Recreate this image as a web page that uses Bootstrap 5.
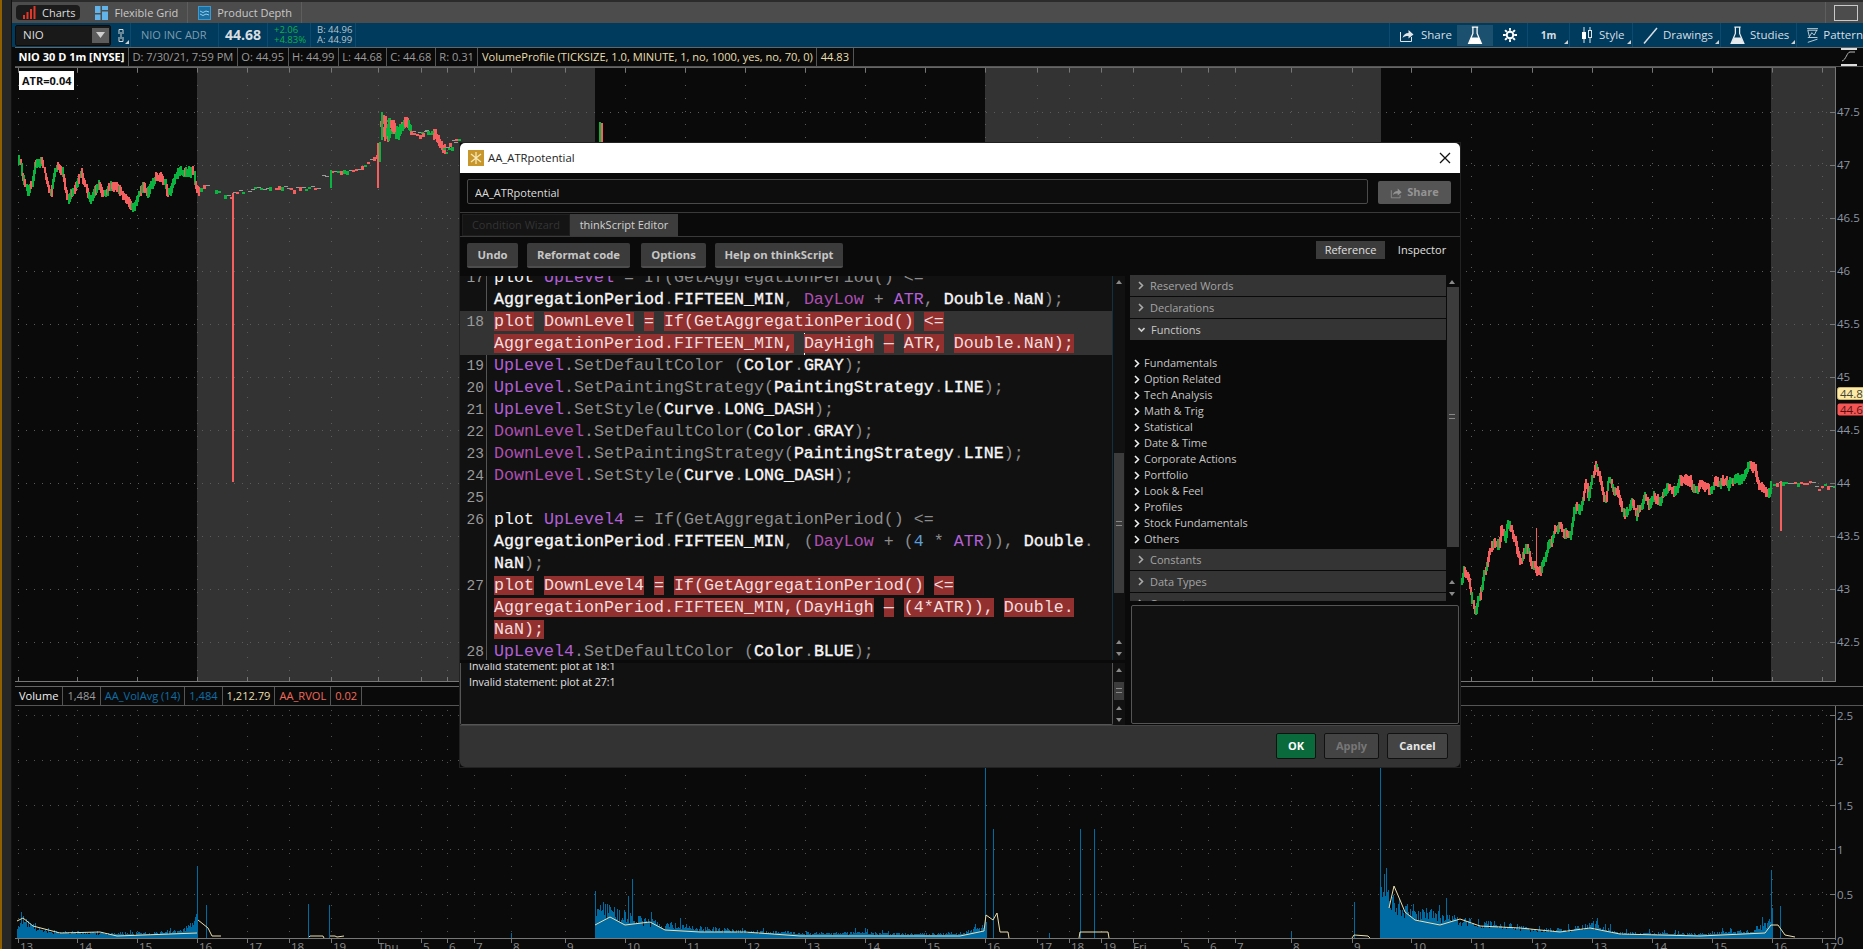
<!DOCTYPE html>
<html lang="en">
<head>
<meta charset="utf-8">
<title>AA_ATRpotential</title>
<link href="https://cdn.jsdelivr.net/npm/bootstrap@5.3.0/dist/css/bootstrap.min.css" rel="stylesheet">
<style>
html,body{height:949px;overflow:hidden;background:#0a0a0a}
body{font-family:"Open Sans","Liberation Sans",sans-serif;font-size:11px;color:#ccc;line-height:1.2}
.shell{width:1863px;height:949px;position:relative}
.edge-strip{width:2px;background:#8f5f00}
.rail-strip{width:10px;background:#262626;border-right:1px solid #111}
.main-col{width:1851px}
.top-sliver{height:2px;background:#2b2b2b}
.tabs-bar{height:21px;background:#4c4c4c;padding-left:4px}
.ws-tab{height:15px;padding:0 5px 0 7px;color:#c9c9c9;font-size:11px;gap:6px;white-space:nowrap}
.ws-tab.on{background:#1b1b1b;border-radius:4px;color:#ddd;margin-right:8px}
.ws-sep{width:1px;height:21px;background:#5e5e5e;margin:0 6px 0 0}
.win-box{width:24px;height:16px;border:1px solid #c9c9c9;margin-left:8px;margin-right:5px}
.blue-bar{height:24px;background:#003a5c;padding-left:3px;color:#c7d2d9}
.sym-box{width:96px;height:21px;background:#191919;border:1px solid #0b0b0b;border-radius:2px;padding-left:7px;color:#ddd;font-size:11.5px}
.sym-drop{width:17px;height:15px;background:#5c5c5c;margin-right:1px}
.bsep{width:1px;height:24px;background:#0c4b70;flex:none}
.link-cell{width:19px;height:24px;position:relative}
.sym-name{color:#7f9cae;font-size:11px;padding:0 10px;width:87px;white-space:nowrap}
.last-px{font-weight:700;font-size:14px;color:#d8dde0;width:48px;text-align:center;white-space:nowrap}
.mini{font-size:9.500px;line-height:10px;padding-left:6px;white-space:nowrap}
.mini.up{color:#10b14a;width:42px}
.mini.ba{color:#b8c4cc;width:44px}
.tool-item{height:24px;gap:5px;font-size:11.500px;color:#d7dfe4;white-space:nowrap;position:relative;flex:none;overflow:hidden}
.ti-share{width:67px;padding-left:9px;gap:6px}
.ti-flask{width:36px;height:21px;background:#1c506f}
.ti-gear{width:34px}
.ti-tf{width:41px;font-size:10px;font-weight:700}
.ti-style{width:62px;padding-left:11px;gap:6px}
.ti-draw{width:87px;padding-left:10px}
.ti-stud{width:75px;padding-left:9px}
.ti-patt{width:66px;padding-left:10px}
.tool-item.more:after,.link-cell:after{content:"";position:absolute;right:1px;bottom:3px;border-style:solid;border-width:0 0 4px 4px;border-color:transparent transparent #d0d0d0 transparent}
.head-row{height:20px;margin-left:3px;background:#0a0a0a;border-top:1px solid #666;border-bottom:1px solid #555;white-space:nowrap;overflow:hidden}
.hc{height:100%;padding:0 3.500px;border-right:1px solid #555;color:#9b9b9b;font-size:11.100px}
.hc.t{color:#fff;font-weight:700;font-size:11px}
.hc.v{color:#e9dfae}
.hc.w{color:#f2f2f2}
.hc.b{color:#0f6ea6}
.hc.r{color:#ef6a5c}
.pane-svg{display:block;margin-left:3px}
.gap-band{height:4px;background:#0a0a0a}
.study-row{border-top:1px solid #666;border-bottom:1px solid #555}
.study-row .hc{padding:0 4px}
.side-fx{width:28px;height:18px;flex:none}
.atr-tag{top:71px;left:19px;background:#fff;color:#111;font-weight:700;font-size:11px;padding:3px 2px 3px 3px;line-height:13px}
.dlg{left:460px;top:143px;width:1000px;height:624px;background:#0a0a0a;border:0;border-radius:0;box-shadow:0 0 0 1px #222}
.dlg-title{height:30px;background:#fff;color:#222;padding:0 8px;font-size:11.300px;border:0;border-radius:0}
.dlg-x{width:12px;height:12px;margin-right:1px}
.name-row{height:39px;padding:6px 9px 0 7px;gap:10px}
.name-input{height:25px;padding:1px 7px 0;background:#0d0d0d;border:1px solid #4a4a4a;border-radius:2px;color:#ddd;font-size:11px;width:901px}
.name-input:focus{background:#0d0d0d;color:#ddd}
.btn.share-btn{width:73px;height:23px;margin-top:2px;padding:0;background:#555;border:0;border-radius:2px;color:#949494;font-size:11px;font-weight:700;gap:4px}
.tabs-row{height:25px;border-top:1px solid #3a3a3a;border-bottom:1px solid #3a3a3a;padding:1px 0 1px 2px;margin:0}
.tabs-row .nav-link{padding:0;height:22px;line-height:20px;width:108px;text-align:center;font-size:11px;border-radius:0;background:#141414;color:#333;border:1px solid #1e1e1e}
.tabs-row .nav-link.active{background:#3d3d3d;color:#d2d2d2;border-color:#3d3d3d}
.tool-row{height:38px;padding:6px 7px 0 7px}
.btn.tb{height:25px;padding:0;background:#3b3b3b;border:0;border-bottom:2px solid #4d4d4d;border-radius:2px;color:#c6c6c6;font-size:11.300px;font-weight:700;line-height:23px}
.tb-undo{width:51px;margin-right:9px}
.tb-ref{width:103px;margin-right:11px}
.tb-opt{width:65px;margin-right:9px}
.tb-help{width:128px}
.ri-group{margin-top:-2px;gap:6px}
.ri-tab{font-size:11px;height:18px;line-height:18px;color:#e0e0e0;text-align:center}
.ri-tab.on{background:#3b3b3b;width:69px}
.ri-tab.off{width:62px}
.work{height:450px}
.left-stack{width:665px;gap:3px;padding-top:1px}
.editor{height:384px;background:#111;overflow:hidden}
.code-wrap{width:653px;height:384px;overflow:hidden;background:#111;border-right:1px solid #12303f}
.code-in{margin-top:-9px}
.cl{height:22px;font-family:"Liberation Mono",monospace;font-size:16.670px;line-height:22px;white-space:pre;color:#8c8c8c}
.cl.cur{background:#333}
.lnum{display:inline-block;width:27px;height:22px;padding-right:2px;text-align:right;font-size:14.500px;color:#9a9a9a;border-right:1px solid #555;margin-right:7px;box-sizing:border-box;vertical-align:top}
.cur .lnum{border-right-color:#333}
.k{color:#f4f4f4}
.cn{color:#f6f6f6;-webkit-text-stroke:.35px #f6f6f6}
.pu{color:#b360d8}
.pd{color:#b04fb4}
.nu{color:#5c9fd6}
.er{background:#923030;color:#f1dddd}
.caret-mark{display:inline-block;width:1px;height:22px;background:#fff;margin-right:-1px;vertical-align:top}
.sbar{width:12px;background:#111;position:relative}
.sb-thumb{left:1px;right:1px;background:#3c3c3c}
.sb-a{left:3px;width:0;height:0;border-left:3px solid transparent;border-right:3px solid transparent}
.sb-a.u{border-bottom:4px solid #8a8a8a}
.sb-a.d{border-top:4px solid #8a8a8a}
.sb-g{left:3px;width:6px;height:5px;border-top:1px solid #888;border-bottom:1px solid #888}
.console{height:62px;background:#111;overflow:hidden}
.con-in{width:653px;border:1px solid #555;border-top:0;border-radius:0 0 2px 2px;padding:0 8px;color:#e2e2e2;font-size:10.600px;line-height:16px;overflow:hidden}
.con-txt{margin-top:-5px}
.right-stack{width:330px;margin-left:5px;gap:4px}
.ref-panel{height:326px;overflow:hidden;background:#0a0a0a}
.ref-list{width:316px}
.acc-row{height:21px;margin-bottom:1px;background:#343434;color:#a5a5a5;padding-left:8px;gap:6px;font-size:11px}
.acc-row.open{color:#c9c9c9}
.fn-list{padding:14px 0 2px 4px}
.fn-row{height:16px;gap:4px;color:#c5c5c5;font-size:11px}
.ref-info{height:119px;margin-left:1px;width:328px;border:1px solid #555;border-radius:2px;background:#111}
.dlg-foot{height:42px;background:#333;border:0;border-top:1px solid #444;border-radius:0;padding:7px 12px 0 0;gap:8px}
.btn.fb{height:26px;padding:0;border:1px solid #111;border-radius:2px;background:#444;color:#e8e8e8;font-size:11px;font-weight:700;line-height:24px}
.btn.fb.ok{background:#0b6a3c;color:#fff;width:40px}
.btn.fb.ap{color:#777;width:55px}
.btn.fb.ca{width:61px}
</style>
</head>
<body>
<div class="shell d-flex">
  <div class="edge-strip"></div>
  <div class="rail-strip"></div>
  <div class="main-col d-flex flex-column">
    <div class="top-sliver"></div>
    <div class="tabs-bar d-flex align-items-center">
      <div class="ws-tab on d-flex align-items-center">
        <svg width="13" height="13" viewBox="0 0 13 13"><g fill="#e0392b"><rect x="0" y="9" width="2" height="4"/><rect x="3.500" y="6" width="2" height="7"/><rect x="7" y="3" width="2" height="10"/><rect x="10.500" y="0" width="2" height="13"/></g></svg>Charts</div>
      <div class="ws-tab d-flex align-items-center">
        <svg width="13" height="14" viewBox="0 0 13 14"><g fill="#62b3ea"><rect x="0" y="0" width="5.500" height="7"/><rect x="7" y="0" width="6" height="4"/><rect x="0" y="8.500" width="5.500" height="5.500"/><rect x="7" y="5.500" width="6" height="8.500"/></g></svg>Flexible Grid</div>
      <div class="ws-sep ms-1"></div>
      <div class="ws-tab d-flex align-items-center ps-1">
        <svg width="13" height="14" viewBox="0 0 13 14"><rect x=".5" y=".5" width="12" height="13" fill="#1f6f9e" stroke="#3b9ad2"/><path d="M2 5l3 1.500 3-1.500 3 1M2 8l3 1.500 3-1.500 3 1" fill="none" stroke="#8fd0f4"/></svg>Product Depth</div>
      <div class="ws-sep ms-1"></div>
      <div class="flex-grow-1"></div>
      <div class="ws-sep m-0"></div>
      <div class="win-box"></div>
    </div>
    <div class="blue-bar d-flex align-items-center">
      <div class="sym-box d-flex align-items-center justify-content-between">NIO
        <div class="sym-drop d-flex align-items-center justify-content-center"><svg width="9" height="6" viewBox="0 0 9 6"><path d="M0 0h9L4.500 6z" fill="#cfcfcf"/></svg></div>
      </div>
      <div class="link-cell d-flex align-items-center justify-content-center">
        <svg width="6" height="15" viewBox="0 0 6 15"><path d="M1 6V1.500h4V6M1 9v4.500h4V9M3 4v7" fill="none" stroke="#d5d5d5"/></svg>
      </div>
      <div class="bsep"></div>
      <div class="sym-name">NIO INC ADR</div>
      <div class="bsep"></div>
      <div class="last-px">44.68</div>
      <div class="bsep"></div>
      <div class="mini up">+2.06<br>+4.83%</div>
      <div class="bsep"></div>
      <div class="mini ba">B: 44.96<br>A: 44.99</div>
      <div class="bsep"></div>
      <div class="flex-grow-1"></div>
      <div class="bsep"></div>
      <div class="tool-item ti-share d-flex align-items-center">
        <svg width="16" height="16" viewBox="0 0 16 16"><path d="M1.500 5v9.500h11V10" fill="none" stroke="#dfe6ea"/><path d="M3.500 11c.5-3 3-5 6-5V3l5 4.500-5 4V9c-3 0-4.500.5-6 2z" fill="#dfe6ea"/></svg>Share</div>
      <div class="tool-item ti-flask d-flex align-items-center justify-content-center">
        <svg width="16" height="19" viewBox="0 0 14 18"><path d="M4 1h6M5 1v6L1 16.500h12L9 7V1" fill="none" stroke="#fff" stroke-width="1.200"/><path d="M3.500 11h7L13 17H1z" fill="#fff"/></svg></div>
      <div class="tool-item ti-gear d-flex align-items-center justify-content-center">
        <svg width="14" height="14" viewBox="0 0 15 15"><circle cx="7.500" cy="7.500" r="3.500" fill="none" stroke="#fff" stroke-width="2"/><path d="M7.500 0v3M7.500 12v3M0 7.500h3M12 7.500h3M2.200 2.200l2.100 2.100M10.700 10.700l2.100 2.100M2.200 12.800l2.100-2.100M10.700 4.300l2.100-2.100" stroke="#fff" stroke-width="2"/></svg></div>
      <div class="bsep"></div>
      <div class="tool-item ti-tf more d-flex align-items-center justify-content-center">1m</div>
      <div class="bsep"></div>
      <div class="tool-item ti-style more d-flex align-items-center">
        <svg width="12" height="16" viewBox="0 0 12 16"><path d="M3 0v16M9 0v16" stroke="#dfe6ea"/><rect x="1" y="5" width="4" height="7" fill="#fff"/><rect x="7.500" y="3.500" width="3" height="7" fill="#003a5c" stroke="#dfe6ea"/></svg>Style</div>
      <div class="bsep"></div>
      <div class="tool-item ti-draw more d-flex align-items-center">
        <svg width="15" height="17" viewBox="0 0 15 17"><path d="M1 16.500L14 1" stroke="#d7dfe4" stroke-width="1.500"/></svg>Drawings</div>
      <div class="bsep"></div>
      <div class="tool-item ti-stud more d-flex align-items-center">
        <svg width="15" height="19" viewBox="0 0 14 18"><path d="M4 1h6M5 1v6L1 16.500h12L9 7V1" fill="none" stroke="#e5ebee" stroke-width="1.200"/><path d="M3.500 11h7L13 17H1z" fill="#e5ebee"/></svg>Studies</div>
      <div class="bsep"></div>
      <div class="tool-item ti-patt d-flex align-items-center">
        <svg width="14" height="19" viewBox="0 0 14 19"><path d="M0 1h14M1 3h12M1 3l2 8 3-5 3 3 3-6M1 12h12M1 18l12-4" fill="none" stroke="#e5ebee"/></svg><span>Pattern</span></div>
    </div>

    <div class="d-flex head-row align-items-center">
      <div class="hc t d-flex align-items-center">NIO 30 D 1m [NYSE]</div>
      <div class="hc d-flex align-items-center">D: 7/30/21, 7:59 PM</div>
      <div class="hc d-flex align-items-center">O: 44.95</div>
      <div class="hc d-flex align-items-center">H: 44.99</div>
      <div class="hc d-flex align-items-center">L: 44.68</div>
      <div class="hc d-flex align-items-center">C: 44.68</div>
      <div class="hc d-flex align-items-center">R: 0.31</div>
      <div class="hc v d-flex align-items-center">VolumeProfile (TICKSIZE, 1.0, MINUTE, 1, no, 1000, yes, no, 70, 0)</div>
      <div class="hc v d-flex align-items-center">44.83</div>
      <div class="flex-grow-1"></div>
      <svg class="side-fx" viewBox="0 0 28 18"><path d="M6 1h16M6 17h16" stroke="#ddd" stroke-width="2"/><path d="M7 13c4-1 5-9 8-9h5" fill="none" stroke="#bbb"/></svg>
    </div>
    <svg id="mainChart" class="pane-svg" width="1848" height="615" viewBox="15 67 1848 615"></svg>
    <div class="gap-band"></div>
    <div class="d-flex head-row study-row align-items-center">
      <div class="hc w d-flex align-items-center">Volume</div>
      <div class="hc d-flex align-items-center">1,484</div>
      <div class="hc b d-flex align-items-center">AA_VolAvg (14)</div>
      <div class="hc b d-flex align-items-center">1,484</div>
      <div class="hc v d-flex align-items-center">1,212.79</div>
      <div class="hc r d-flex align-items-center">AA_RVOL</div>
      <div class="hc r d-flex align-items-center">0.02</div>
    </div>
    <svg id="volChart" class="pane-svg" width="1848" height="243" viewBox="15 706 1848 243"></svg>
  </div>

  <div class="atr-tag position-absolute">ATR=0.04</div>

  <div class="dlg card position-absolute">
    <div class="dlg-title card-header d-flex align-items-center">
      <svg class="me-1" width="16" height="16" viewBox="0 0 16 16"><rect width="16" height="16" fill="#c7962c"/><path d="M8 2v12M3 4l10 8M13 4L3 12" stroke="#f6e9b8" stroke-width="1.300"/></svg>
      <span>AA_ATRpotential</span>
      <svg class="dlg-x ms-auto" viewBox="0 0 12 12"><path d="M1 1l10 10M11 1L1 11" stroke="#111" stroke-width="1.300"/></svg>
    </div>
    <div class="name-row d-flex">
      <input class="form-control name-input" value="AA_ATRpotential" aria-label="Study name">
      <button class="btn share-btn d-flex align-items-center justify-content-center" type="button">
        <svg width="13" height="12" viewBox="0 0 16 15"><path d="M1.500 4v9.500h11V10" fill="none" stroke="#949494"/><path d="M3.500 10c.5-3 3-5 6-5V2l5 4.500-5 4V8c-3 0-4.500.5-6 2z" fill="#949494"/></svg>Share</button>
    </div>
    <ul class="nav tabs-row">
      <li class="nav-item"><a class="nav-link" href="#">Condition Wizard</a></li>
      <li class="nav-item"><a class="nav-link active" href="#">thinkScript Editor</a></li>
    </ul>
    <div class="tool-row d-flex align-items-start">
      <button class="btn tb tb-undo" type="button">Undo</button>
      <button class="btn tb tb-ref" type="button">Reformat code</button>
      <button class="btn tb tb-opt" type="button">Options</button>
      <button class="btn tb tb-help" type="button">Help on thinkScript</button>
      <div class="ms-auto d-flex ri-group align-items-center">
        <div class="ri-tab on">Reference</div>
        <div class="ri-tab off">Inspector</div>
      </div>
    </div>
    <div class="work d-flex">
      <div class="left-stack d-flex flex-column">
        <div class="editor d-flex">
          <div class="code-wrap">
            <div class="code-in">
<div class="cl"><span class="lnum">17</span><span class="k">plot</span> <span class="pu">UpLevel</span> = If(GetAggregationPeriod() &lt;=</div>
<div class="cl"><span class="lnum"></span><span class="cn">AggregationPeriod</span>.<span class="cn">FIFTEEN_MIN</span>, <span class="pd">DayLow</span> + <span class="pu">ATR</span>, <span class="cn">Double</span>.<span class="cn">NaN</span>);</div>
<div class="cl cur"><span class="lnum">18</span><span class="er">plot</span> <span class="er">DownLevel</span> <span class="er">=</span> <span class="er">If(GetAggregationPeriod()</span> <span class="er">&lt;=</span></div>
<div class="cl cur"><span class="lnum"></span><span class="er">AggregationPeriod.FIFTEEN_MIN,</span> <span class="caret-mark"></span><span class="er">DayHigh</span> <span class="er">—</span> <span class="er">ATR,</span> <span class="er">Double.NaN);</span></div>
<div class="cl"><span class="lnum">19</span><span class="pu">UpLevel</span>.SetDefaultColor (<span class="cn">Color</span>.<span class="cn">GRAY</span>);</div>
<div class="cl"><span class="lnum">20</span><span class="pu">UpLevel</span>.SetPaintingStrategy(<span class="cn">PaintingStrategy</span>.<span class="cn">LINE</span>);</div>
<div class="cl"><span class="lnum">21</span><span class="pu">UpLevel</span>.SetStyle(<span class="cn">Curve</span>.<span class="cn">LONG_DASH</span>);</div>
<div class="cl"><span class="lnum">22</span><span class="pd">DownLevel</span>.SetDefaultColor(<span class="cn">Color</span>.<span class="cn">GRAY</span>);</div>
<div class="cl"><span class="lnum">23</span><span class="pd">DownLevel</span>.SetPaintingStrategy(<span class="cn">PaintingStrategy</span>.<span class="cn">LINE</span>);</div>
<div class="cl"><span class="lnum">24</span><span class="pd">DownLevel</span>.SetStyle(<span class="cn">Curve</span>.<span class="cn">LONG_DASH</span>);</div>
<div class="cl"><span class="lnum">25</span></div>
<div class="cl"><span class="lnum">26</span><span class="k">plot</span> <span class="pu">UpLevel4</span> = If(GetAggregationPeriod() &lt;=</div>
<div class="cl"><span class="lnum"></span><span class="cn">AggregationPeriod</span>.<span class="cn">FIFTEEN_MIN</span>, (<span class="pd">DayLow</span> + (<span class="nu">4</span> * <span class="pu">ATR</span>)), <span class="cn">Double</span>.</div>
<div class="cl"><span class="lnum"></span><span class="cn">NaN</span>);</div>
<div class="cl"><span class="lnum">27</span><span class="er">plot</span> <span class="er">DownLevel4</span> <span class="er">=</span> <span class="er">If(GetAggregationPeriod()</span> <span class="er">&lt;=</span></div>
<div class="cl"><span class="lnum"></span><span class="er">AggregationPeriod.FIFTEEN_MIN,(DayHigh</span> <span class="er">—</span> <span class="er">(4*ATR)),</span> <span class="er">Double.</span></div>
<div class="cl"><span class="lnum"></span><span class="er">NaN);</span></div>
<div class="cl"><span class="lnum">28</span><span class="pu">UpLevel4</span>.SetDefaultColor (<span class="cn">Color</span>.<span class="cn">BLUE</span>);</div>
            </div>
          </div>
          <div class="sbar">
            <i class="sb-a u position-absolute" style="top:4px"></i>
            <i class="sb-thumb position-absolute" style="top:177px;height:140px"></i>
            <i class="sb-g position-absolute" style="top:245px"></i>
            <i class="sb-a u position-absolute" style="top:364px"></i>
            <i class="sb-a d position-absolute" style="top:376px"></i>
          </div>
        </div>
        <div class="console d-flex">
          <div class="con-in"><div class="con-txt">Invalid statement: plot at 18:1<br>Invalid statement: plot at 27:1</div></div>
          <div class="sbar">
            <i class="sb-a u position-absolute" style="top:5px"></i>
            <i class="sb-thumb position-absolute" style="top:19px;height:18px"></i>
            <i class="sb-g position-absolute" style="top:25px"></i>
            <i class="sb-a u position-absolute" style="top:43px"></i>
            <i class="sb-a d position-absolute" style="top:55px"></i>
          </div>
        </div>
      </div>
      <div class="right-stack d-flex flex-column">
        <div class="ref-panel d-flex">
          <div class="ref-list">
            <div class="acc-row d-flex align-items-center"><svg width="6" height="9" viewBox="0 0 6 9"><path d="M1 1l3.500 3.500L1 8" fill="none" stroke="#aaa" stroke-width="1.600"/></svg>Reserved Words</div>
            <div class="acc-row d-flex align-items-center"><svg width="6" height="9" viewBox="0 0 6 9"><path d="M1 1l3.500 3.500L1 8" fill="none" stroke="#aaa" stroke-width="1.600"/></svg>Declarations</div>
            <div class="acc-row open d-flex align-items-center"><svg width="7" height="9" viewBox="0 0 7 9"><path d="M.5 3l3 3 3-3" fill="none" stroke="#ccc" stroke-width="1.600"/></svg>Functions</div>
            <div class="fn-list">
              <div class="fn-row d-flex align-items-center"><svg width="6" height="9" viewBox="0 0 6 9"><path d="M1 1l3.500 3.500L1 8" fill="none" stroke="#eee" stroke-width="1.600"/></svg>Fundamentals</div>
              <div class="fn-row d-flex align-items-center"><svg width="6" height="9" viewBox="0 0 6 9"><path d="M1 1l3.500 3.500L1 8" fill="none" stroke="#eee" stroke-width="1.600"/></svg>Option Related</div>
              <div class="fn-row d-flex align-items-center"><svg width="6" height="9" viewBox="0 0 6 9"><path d="M1 1l3.500 3.500L1 8" fill="none" stroke="#eee" stroke-width="1.600"/></svg>Tech Analysis</div>
              <div class="fn-row d-flex align-items-center"><svg width="6" height="9" viewBox="0 0 6 9"><path d="M1 1l3.500 3.500L1 8" fill="none" stroke="#eee" stroke-width="1.600"/></svg>Math &amp; Trig</div>
              <div class="fn-row d-flex align-items-center"><svg width="6" height="9" viewBox="0 0 6 9"><path d="M1 1l3.500 3.500L1 8" fill="none" stroke="#eee" stroke-width="1.600"/></svg>Statistical</div>
              <div class="fn-row d-flex align-items-center"><svg width="6" height="9" viewBox="0 0 6 9"><path d="M1 1l3.500 3.500L1 8" fill="none" stroke="#eee" stroke-width="1.600"/></svg>Date &amp; Time</div>
              <div class="fn-row d-flex align-items-center"><svg width="6" height="9" viewBox="0 0 6 9"><path d="M1 1l3.500 3.500L1 8" fill="none" stroke="#eee" stroke-width="1.600"/></svg>Corporate Actions</div>
              <div class="fn-row d-flex align-items-center"><svg width="6" height="9" viewBox="0 0 6 9"><path d="M1 1l3.500 3.500L1 8" fill="none" stroke="#eee" stroke-width="1.600"/></svg>Portfolio</div>
              <div class="fn-row d-flex align-items-center"><svg width="6" height="9" viewBox="0 0 6 9"><path d="M1 1l3.500 3.500L1 8" fill="none" stroke="#eee" stroke-width="1.600"/></svg>Look &amp; Feel</div>
              <div class="fn-row d-flex align-items-center"><svg width="6" height="9" viewBox="0 0 6 9"><path d="M1 1l3.500 3.500L1 8" fill="none" stroke="#eee" stroke-width="1.600"/></svg>Profiles</div>
              <div class="fn-row d-flex align-items-center"><svg width="6" height="9" viewBox="0 0 6 9"><path d="M1 1l3.500 3.500L1 8" fill="none" stroke="#eee" stroke-width="1.600"/></svg>Stock Fundamentals</div>
              <div class="fn-row d-flex align-items-center"><svg width="6" height="9" viewBox="0 0 6 9"><path d="M1 1l3.500 3.500L1 8" fill="none" stroke="#eee" stroke-width="1.600"/></svg>Others</div>
            </div>
            <div class="acc-row d-flex align-items-center"><svg width="6" height="9" viewBox="0 0 6 9"><path d="M1 1l3.500 3.500L1 8" fill="none" stroke="#aaa" stroke-width="1.600"/></svg>Constants</div>
            <div class="acc-row d-flex align-items-center"><svg width="6" height="9" viewBox="0 0 6 9"><path d="M1 1l3.500 3.500L1 8" fill="none" stroke="#aaa" stroke-width="1.600"/></svg>Data Types</div>
            <div class="acc-row d-flex align-items-center"><svg width="6" height="9" viewBox="0 0 6 9"><path d="M1 1l3.500 3.500L1 8" fill="none" stroke="#aaa" stroke-width="1.600"/></svg>Operators</div>
          </div>
          <div class="sbar flex-grow-1 bg-transparent">
            <i class="sb-a u position-absolute" style="top:5px"></i>
            <i class="sb-thumb position-absolute" style="top:12px;height:260px"></i>
            <i class="sb-g position-absolute" style="top:139px"></i>
            <i class="sb-a u position-absolute" style="top:305px"></i>
            <i class="sb-a d position-absolute" style="top:317px"></i>
          </div>
        </div>
        <div class="ref-info"></div>
      </div>
    </div>
    <div class="dlg-foot card-footer d-flex justify-content-end flex-grow-1">
      <button class="btn fb ok" type="button">OK</button>
      <button class="btn fb ap" type="button">Apply</button>
      <button class="btn fb ca" type="button">Cancel</button>
    </div>
  </div>
</div>
<script src="https://cdn.jsdelivr.net/npm/bootstrap@5.3.0/dist/js/bootstrap.bundle.min.js"></script>
<script>
(function(){
var seed=12345;function R(){seed=(seed*16807)%2147483647;return seed/2147483647;}
var ticks=[18,77,137,197,247,289,331,378,421,447,474,511,565,625,685,745,805,865,925,985,1037,1069,1101,1133,1181,1208,1235,1291,1352,1411,1471,1532,1592,1652,1712,1772,1822];
var lbl=['13','14','15','16','17','18','19','Thu','5','6','7','8','9','10','11','12','13','14','15','16','17','18','19','Fri','5','6','7','8','9','10','11','12','13','14','15','16','17'];
var o=[];
function rect(x,y,w,h,c){o.push('<rect x="'+x+'" y="'+y+'" width="'+w+'" height="'+h+'" fill="'+c+'" shape-rendering="crispEdges"/>');}
function line(a,b,c,d,s,da){o.push('<line x1="'+a+'" y1="'+b+'" x2="'+c+'" y2="'+d+'" stroke="'+s+'"'+(da?' stroke-dasharray="'+da+'"':'')+' shape-rendering="crispEdges"/>');}
function text(x,y,t,c){o.push('<text x="'+x+'" y="'+y+'" fill="'+c+'" font-family="Open Sans" font-size="11.500">'+t+'</text>');}
function mapPts(a,ox,oy,s){var r=[];for(var i=0;i<a.length;i++)r.push([ox+a[i][0]/s,oy+a[i][1]/s]);return r;}
function interp(p,x){for(var i=1;i<p.length;i++){if(x<=p[i][0]){var t=(x-p[i-1][0])/(p[i][0]-p[i-1][0]||1);return p[i-1][1]+t*(p[i][1]-p[i-1][1]);}}return p[p.length-1][1];}
function dense(p,noise){var prev=interp(p,p[0][0]);for(var x=p[0][0];x<p[p.length-1][0];x+=1.2){var x0=Math.round(x);var y=interp(p,x)+(R()-.5)*noise;var h=Math.max(Math.abs(prev-y),6)+R()*5;var top=(prev+y)/2-h/2;var up=interp(p,x+1.500)<interp(p,x-1.500);var c=(R()<.82)===up?'#0ab53f':'#f55f5f';rect(x0,Math.round(top),2,Math.round(h),c);prev=y;}}
function sparse(p){for(var x=p[0][0];x<p[p.length-1][0];x+=3){if(R()<.14)continue;var y=Math.round(interp(p,x)+(R()-.5)*3);var r=R();var c=r<.38?'#0ab53f':(r<.7?'#f55f5f':'#9a9a9a');rect(Math.round(x),y,r<.7?3:4,r<.7?(R()<.4?4:2):1,c);}}
/* main chart */
rect(15,67,182,615,'#0a0a0a');rect(197,67,398,615,'#333');rect(595,67,390,615,'#0a0a0a');rect(985,67,396,615,'#333');rect(1381,67,390,615,'#0a0a0a');rect(1771,67,64,615,'#333');
var yp=[[47.5,'47.5'],[47,'47'],[46.5,'46.5'],[46,'46'],[45.500,'45.5'],[45,'45'],[44.5,'44.5'],[44,'44'],[43.5,'43.5'],[43,'43'],[42.5,'42.5']];
yp.forEach(function(a){var y=Math.round(483-(a[0]-44)*106);line(18,y,1830,y,'#5c5c5c','1 7');line(1830,y,1835,y,'#777');text(1837,y+4,a[1],'#8b95a3');});
ticks.forEach(function(x){line(x,72,x,678,'#5c5c5c','1 12');line(x,67,x,72,'#777');line(x,677,x,682,'#777');});
var L=mapPts([[55,305],[65,350],[78,400],[90,370],[100,320],[125,300],[132,350],[148,400],[165,320],[185,340],[200,425],[240,340],[265,420],[295,370],[305,400],[330,380],[360,395],[395,450],[425,375],[437,405],[465,345],[490,360],[500,405],[530,340],[565,335],[575,325],[585,390],[598,395]],0,60,3);
dense(L,6);
var M=mapPts([[600,385],[615,375],[655,395],[685,410],[710,390],[735,400],[760,385],[850,380],[880,385],[960,382]],0,60,3);sparse(M);
var N=mapPts([[965,350],[990,330],[1030,330],[1070,330],[1090,310],[1130,285]],0,60,3);sparse(N);
var P=mapPts([[1145,180],[1170,175],[1190,225],[1215,185],[1240,225],[1275,210],[1300,220],[1330,275],[1340,270],[1375,235]],0,60,3);sparse(P);
dense(mapPts([[1150,180],[1160,235],[1178,195],[1188,232],[1205,190],[1222,190]],0,60,3),6);
dense(mapPts([[1300,225],[1335,278]],0,60,3),4);
var Q=mapPts([[0,190],[10,240],[25,190],[45,215],[75,185],[90,215]],380,60,3);dense(Q,5);
sparse(mapPts([[90,215],[115,230],[135,210],[165,215],[190,265],[230,235],[240,240]],380,60,3));
rect(232,193,2,289,'#f55f5f');rect(377,143,2,45,'#f55f5f');rect(330,170,2,18,'#0ab53f');rect(379,142,2,20,'#0ab53f');rect(381,112,2,28,'#0ab53f');rect(384,120,2,21,'#f55f5f');
rect(599,122,2,21,'#0ab53f');rect(601,123,2,20,'#f55f5f');
var Rr=mapPts([[182,690],[190,660],[205,700],[222,785],[240,720],[265,610],[280,570],[295,600],[300,520],[312,575],[322,515],[340,570],[358,630],[378,590],[395,650],[418,660],[440,590],[460,545],[478,520],[490,550],[510,550],[525,460],[535,485],[555,400],[562,445],[585,340],[605,430],[615,450],[622,385],[635,425],[650,430],[670,495],[695,460],[705,490],[735,440],[745,465],[758,430],[775,460],[800,410],[822,420],[835,390],[865,392],[880,425],[895,405],[930,420],[940,395],[985,400],[1025,385],[1045,345],[1060,355],[1070,395],[1105,430],[1113,395]],1400,350,3);
dense(Rr,7);
sparse(mapPts([[1118,400],[1150,395],[1180,400],[1230,395],[1255,415],[1265,405],[1300,403]],1400,350,3));
rect(1780,481,2,50,'#f55f5f');rect(1536,528,1,39,'#f55f5f');
line(15,67,1835,67,'#666');line(15,681,1835,681,'#777');line(1835,67,1835,682,'#777');
o.push('<rect x="1837.500" y="387.500" width="30" height="12" rx="2" fill="#fdeaa6" stroke="#c9b36a"/>');o.push('<text x="1840" y="397.500" fill="#443" font-family="Open Sans" font-size="11.500">44.83</text>');
o.push('<rect x="1837.500" y="403.500" width="30" height="12" rx="2" fill="#f55555"/>');o.push('<text x="1840" y="413.500" fill="#511" font-family="Open Sans" font-size="11.500">44.68</text>');
document.getElementById('mainChart').innerHTML=o.join('');
/* volume chart */
o=[];
[[715,'2.5'],[760,'2'],[805,'1.5'],[849,'1'],[894,'0.5']].forEach(function(a){line(18,a[0],1830,a[0],'#555','1 7');line(1830,a[0],1835,a[0],'#777');text(1837,a[0]+5,a[1],'#8b95a3');});
text(1837,945,'0','#8b95a3');
ticks.forEach(function(x,i){line(x,710,x,934,'#505050','1 12');line(x,938,x,943,'#777');text(x+(lbl[i].length>2?0:2),951,lbl[i],'#8b8b8b');});
function vol(x0,x1,env){for(var x=x0;x<=x1;x++){var h=interp(env,x);h=h*(.65+R()*.6);if(R()<.05)h*=1.6;if(h<1)h=1;rect(x,Math.round(938-h),1,Math.round(h),'#006aa3');}}
vol(17,197,[[17,10],[22,20],[30,14],[40,8],[60,6],[100,5],[150,5],[180,7],[192,14],[197,22]]);
vol(595,986,[[595,33],[610,27],[640,18],[660,14],[700,10],[740,7],[800,5],[860,5],[920,4],[960,5],[980,9],[986,14]]);
vol(1380,1772,[[1381,58],[1390,42],[1400,30],[1425,25],[1450,19],[1475,16],[1500,13],[1540,8],[1570,8],[1590,13],[1620,5],[1700,4],[1750,7],[1768,15],[1772,25]]);
[[197,866],[206,905],[308,904],[329,905],[511,933],[595,891],[632,879],[985,767],[993,829],[1049,933],[1080,829],[1094,829],[1291,932],[1354,902],[1380,767],[1386,868],[1446,898],[1771,870],[1780,906]].forEach(function(a){rect(a[0],a[1],1,938-a[1],'#006aa3');});
function pl(p){o.push('<polyline points="'+p.map(function(a){return a.join(',');}).join(' ')+'" fill="none" stroke="#eadfae" stroke-width="1"/>');}
pl([[17,921],[23,918],[33,926],[60,933],[100,932],[117,936],[197,933]]);
pl([[198,920],[208,928],[212,936],[221,936]]);
pl([[309,937],[310,936],[323,936],[324,938]]);pl([[330,936],[335,936],[337,937],[344,936]]);
pl([[595,925],[610,917],[625,925],[650,922],[665,930],[700,932],[745,932],[800,936],[860,936],[925,936],[960,936],[984,931],[986,915],[993,920],[997,913],[1000,932],[1008,932],[1009,938]]);
pl([[1079,938],[1080,932],[1094,932],[1108,932],[1109,938]]);
pl([[1352,938],[1354,935],[1368,936],[1370,938]]);
pl([[1389,908],[1394,886],[1400,900],[1405,912],[1415,920],[1440,925],[1460,919],[1480,926],[1520,928],[1560,932],[1590,928],[1620,934],[1700,936],[1765,933],[1771,925],[1778,925],[1785,935],[1795,937]]);
line(15,938,1835,938,'#777');line(1835,706,1835,940,'#777');
document.getElementById('volChart').innerHTML=o.join('');
})();
</script>
</body>
</html>
